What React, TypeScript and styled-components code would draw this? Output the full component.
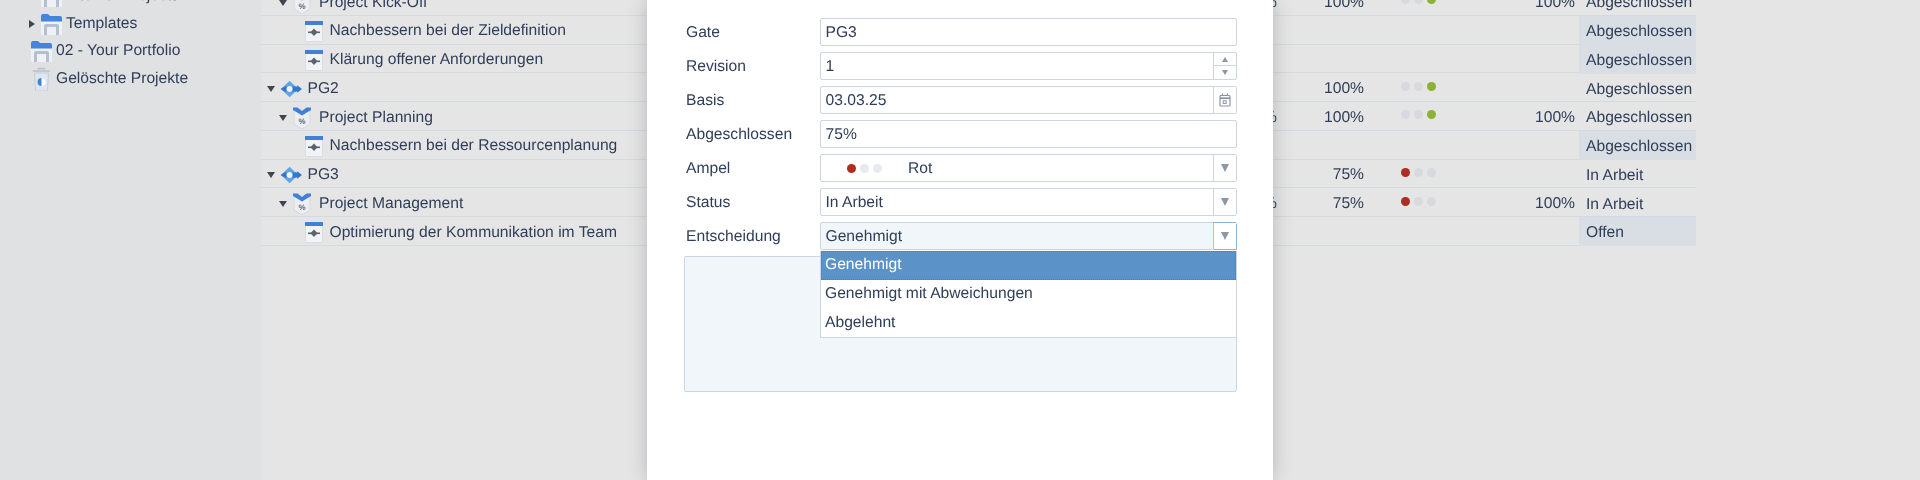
import React from "react";
import styled, { createGlobalStyle } from "styled-components";

const Global = createGlobalStyle`
  html, body { margin: 0; padding: 0; background: #e5e5e5; }
  body { font-family: "Liberation Sans", Arial, sans-serif; color: #2f3e58; text-rendering: geometricPrecision; }
`;

const Page = styled.div`
  position: relative;
  display: flex;
  width: 1920px;
  height: 480px;
  overflow: hidden;
  font-size: 15.65px;
  filter: blur(0.5px);
`;

const Sidebar = styled.aside`
  width: 261px;
  flex: none;
  background: #dfe1e3;
  margin-top: -17.5px;
`;

const TreeItem = styled.div<{ $indent: number }>`
  display: flex;
  align-items: center;
  height: 27.5px;
  padding-left: ${(p) => p.$indent}px;
`;

const Caret = styled.span<{ $dir: "right" | "down" }>`
  width: 0;
  height: 0;
  flex: none;
  ${(p) =>
    p.$dir === "right"
      ? `border-left: 6px solid #3f4650; border-top: 4px solid transparent; border-bottom: 4px solid transparent; margin-right: 6px;`
      : `border-top: 6px solid #3f4650; border-left: 4px solid transparent; border-right: 4px solid transparent; margin-right: 4px;`}
`;

const IconSlot = styled.span<{ $w: number; $mr: number; $ml?: number }>`
  display: flex;
  flex: none;
  width: ${(p) => p.$w}px;
  margin-left: ${(p) => p.$ml ?? 0}px;
  margin-right: ${(p) => p.$mr}px;
`;

const Main = styled.main`
  flex: 1;
  background: #e5e5e5;
`;

const Table = styled.div`
  width: 1435px;
  margin-top: -13px;
`;

const Row = styled.div`
  display: grid;
  grid-template-columns: 1016px 87px 111px 100px 4px 117px;
  height: 28.75px;
  align-items: stretch;
  box-sizing: border-box;
  border-bottom: 1.5px solid #d5d9e1;
`;

const TreeCell = styled.div<{ $depth: number }>`
  display: flex;
  align-items: center;
  padding: 3.5px 0 0 ${(p) => 6 + p.$depth * 11.5}px;
`;

const NumCell = styled.div`
  display: flex;
  align-items: center;
  justify-content: flex-end;
  padding-top: 3.5px;
`;

const DotsCell = styled.div`
  display: flex;
  align-items: center;
  gap: 4px;
  padding: 0 0 2px 37px;
`;

const Dot = styled.span<{ $color: string }>`
  width: 9px;
  height: 9px;
  flex: none;
  border-radius: 50%;
  background: ${(p) => p.$color};
`;

const StatusCell = styled.div<{ $hl: boolean }>`
  grid-column: 6;
  display: flex;
  align-items: center;
  padding: 3.5px 0 0 7px;
  margin-bottom: -1.5px;
  background: ${(p) => (p.$hl ? "#d9dee4" : "transparent")};
`;

const CutPercent = styled.span`
  margin-left: auto;
`;

const Modal = styled.section`
  position: absolute;
  left: 647px;
  top: 0;
  width: 626px;
  height: 480px;
  box-sizing: border-box;
  padding: 18px 36px 0 37px;
  background: #fff;
  box-shadow: 0 0 18px rgba(60, 65, 75, 0.28);
  display: flex;
  flex-direction: column;
  gap: 6px;
`;

const FormRow = styled.div`
  display: grid;
  grid-template-columns: 136px 1fr;
  height: 28px;
  align-items: center;
`;

const Label = styled.label`
  padding: 1.5px 0 0 2px;
`;

const Field = styled.div<{ $focus?: boolean }>`
  position: relative;
  display: flex;
  height: 28px;
  box-sizing: border-box;
  border: 1.5px solid #ccd6e2;
  border-radius: 2px;
  background: ${(p) => (p.$focus ? "#f1f6fb" : "#fff")};
`;

const Value = styled.div`
  flex: 1;
  display: flex;
  align-items: center;
  padding: 2.6px 0 0 4.5px;
  white-space: nowrap;
`;

const Addon = styled.div<{ $focus?: boolean }>`
  width: 22px;
  flex: none;
  display: flex;
  align-items: center;
  justify-content: center;
  background: #fff;
  border-left: 1.5px solid #ccd6e2;
  ${(p) =>
    p.$focus
      ? `box-shadow: 1px 1px 0 #8fb3d9, 0 -1px 0 #8fb3d9; border-left-color: #a9c4e0;`
      : ""}
`;

const Stepper = styled.div`
  width: 22px;
  flex: none;
  display: grid;
  grid-template-rows: 1fr 1fr;
  border-left: 1.5px solid #ccd6e2;
`;

const StepButton = styled.div<{ $top?: boolean }>`
  display: flex;
  align-items: center;
  justify-content: center;
  ${(p) => (p.$top ? "border-bottom: 1.5px solid #ccd6e2;" : "")}
`;

const Arrow = styled.span<{ $up?: boolean; $small?: boolean }>`
  width: 0;
  height: 0;
  border-left: ${(p) => (p.$small ? 3.5 : 4.5)}px solid transparent;
  border-right: ${(p) => (p.$small ? 3.5 : 4.5)}px solid transparent;
  ${(p) => (p.$up ? "border-bottom" : "border-top")}: ${(p) => (p.$small ? 5 : 8)}px solid #8d96a6;
`;

const AmpelValue = styled(Value)`
  gap: 4px;
  padding-left: 26px;
`;

const AmpelDots = styled.span`
  display: flex;
  gap: 4px;
  margin-top: -2.6px;
`;

const AmpelText = styled.span`
  margin-left: 22px;
`;

const TextArea = styled.div`
  height: 136px;
  box-sizing: border-box;
  border: 1.5px solid #ccd6e2;
  border-radius: 2px;
  background: #f1f6fb;
`;

const Dropdown = styled.ul`
  position: absolute;
  left: -1.5px;
  right: -1px;
  top: 27.5px;
  height: 87px;
  margin: 0;
  padding: 0;
  box-sizing: border-box;
  list-style: none;
  background: #fff;
  border: 1.5px solid #ccd6e2;
  border-top-width: 0;
  z-index: 2;
`;

const Option = styled.li<{ $selected?: boolean }>`
  display: flex;
  align-items: center;
  height: 29px;
  padding-left: 4.5px;
  box-sizing: border-box;
  ${(p) =>
    p.$selected
      ? `background: #5b93c9; color: #fff; outline: 1px dotted #4a80b8; outline-offset: -1px;`
      : ""}
`;

const FolderIcon = () => (
  <svg width="21" height="22" viewBox="0 0 21 22">
    <rect x="0" y="7" width="21" height="15" rx="1" fill="#eef1f5" />
    <path d="M0 3a2 2 0 0 1 2-2h5l2 2h10a2 2 0 0 1 2 2v3.5H0z" fill="#4584db" />
    <path d="M3 22V13a2 2 0 0 1 2-2h11a2 2 0 0 1 2 2v9h-3v-8H6v8z" fill="#b4c0cf" />
  </svg>
);

const TrashIcon = () => (
  <svg width="19" height="24" viewBox="0 0 19 24">
    <path d="M6.5 2.5v-1h6v1M1 4h17" stroke="#b7c0cb" strokeWidth="1.6" fill="none" />
    <path d="M2.5 6h14l-1 17a1 1 0 0 1-1 1h-10a1 1 0 0 1-1-1z" fill="#dde6f1" stroke="#c3ccd8" />
    <circle cx="9.5" cy="15" r="4" fill="#fff" />
    <path d="M9.5 11a4 4 0 0 0 0 8z" fill="#3f83d6" />
  </svg>
);

const GateIcon = () => (
  <svg width="22" height="18" viewBox="0 0 23 18">
    <path d="M10 0.5 19 9l-9 8.5L1 9z" fill="#62a4e4" />
    <path d="M0.5 9 5 6.5h13V5l5 4-5 4v-1.5H5z" fill="#2f78cf" />
    <circle cx="10" cy="9" r="3.2" fill="#eef3f9" />
  </svg>
);

const ProjectIcon = () => (
  <svg width="18" height="22" viewBox="0 0 18 22">
    <path d="M1 3h16v14l-8 5-8-5z" fill="#eceef1" stroke="#d6d9de" />
    <path d="M0 0.5h4.5L9 4l4.5-3.5H18v2.5l-9 5.5-9-5.5z" fill="#3f81d8" />
    <text x="9" y="16.5" fontSize="8" fontFamily="Liberation Sans" fontWeight="700" textAnchor="middle" fill="#5d6673">%</text>
  </svg>
);

const TaskIcon = () => (
  <svg width="18" height="21" viewBox="0 0 18 21">
    <rect x="0.5" y="0.5" width="17" height="20" rx="1" fill="#f2f3f5" stroke="#d8dbe0" />
    <rect x="0" y="0" width="18" height="4" fill="#3f81d8" />
    <rect x="3" y="10.5" width="12" height="1.6" fill="#5a6471" />
    <path d="M9 7.5l3.6 3.8L9 15l-3.6-3.7z" fill="#5a6471" />
  </svg>
);

const CalendarIcon = () => (
  <svg width="12" height="14" viewBox="0 0 12 14" fill="none" stroke="#8d96a6" strokeWidth="1.2">
    <rect x="1" y="2.5" width="10" height="10.5" rx="1" />
    <path d="M1 5.2h10" strokeWidth="1.8" />
    <path d="M3.5 0.5v2.5M8.5 0.5v2.5" />
    <rect x="4.2" y="7.8" width="3" height="2.6" strokeWidth="1" />
  </svg>
);

const RED = "#ad2d1f";
const GREEN = "#8bb135";
const OFF = "#d8d9de";
const OFF_LIGHT = "#e8e9ee";

const Dots = ({ on }: { on: "red" | "green" }) => (
  <DotsCell>
    <Dot $color={on === "red" ? RED : OFF} />
    <Dot $color={OFF} />
    <Dot $color={on === "green" ? GREEN : OFF} />
  </DotsCell>
);

type RowData = {
  depth: number;
  kind: "gate" | "project" | "task";
  name: string;
  cut?: string;
  pct?: string;
  on?: "red" | "green";
  pct2?: string;
  status: string;
  hl?: boolean;
};

const rows: RowData[] = [
  { depth: 1, kind: "project", name: "Project Kick-Off", cut: "100%", pct: "100%", on: "green", pct2: "100%", status: "Abgeschlossen" },
  { depth: 2, kind: "task", name: "Nachbessern bei der Zieldefinition", status: "Abgeschlossen", hl: true },
  { depth: 2, kind: "task", name: "Klärung offener Anforderungen", status: "Abgeschlossen", hl: true },
  { depth: 0, kind: "gate", name: "PG2", pct: "100%", on: "green", status: "Abgeschlossen" },
  { depth: 1, kind: "project", name: "Project Planning", cut: "100%", pct: "100%", on: "green", pct2: "100%", status: "Abgeschlossen" },
  { depth: 2, kind: "task", name: "Nachbessern bei der Ressourcenplanung", status: "Abgeschlossen", hl: true },
  { depth: 0, kind: "gate", name: "PG3", pct: "75%", on: "red", status: "In Arbeit" },
  { depth: 1, kind: "project", name: "Project Management", cut: "100%", pct: "75%", on: "red", pct2: "100%", status: "In Arbeit" },
  { depth: 2, kind: "task", name: "Optimierung der Kommunikation im Team", status: "Offen", hl: true },
];

const TreeRowCell = ({ r }: { r: RowData }) => (
  <TreeCell $depth={r.depth}>
    {r.kind === "task" ? (
      <IconSlot $w={18} $mr={7} $ml={14.5}>
        <TaskIcon />
      </IconSlot>
    ) : (
      <>
        <Caret $dir="down" />
        {r.kind === "gate" ? (
          <IconSlot $w={22} $mr={5.5} $ml={1}>
            <GateIcon />
          </IconSlot>
        ) : (
          <IconSlot $w={18} $mr={8} $ml={2.5}>
            <ProjectIcon />
          </IconSlot>
        )}
      </>
    )}
    {r.name}
    <CutPercent>{r.cut}</CutPercent>
  </TreeCell>
);

const TableRow = ({ r }: { r: RowData }) => (
  <Row>
    <TreeRowCell r={r} />
    <NumCell>{r.pct}</NumCell>
    {r.on ? <Dots on={r.on} /> : <div />}
    <NumCell>{r.pct2}</NumCell>
    <StatusCell $hl={!!r.hl}>{r.status}</StatusCell>
  </Row>
);

export default function App() {
  return (
    <>
      <Global />
      <Page>
        <Sidebar>
          <TreeItem $indent={41}>
            <IconSlot $w={21} $mr={4}>
              <FolderIcon />
            </IconSlot>
            Internal Projects
          </TreeItem>
          <TreeItem $indent={29}>
            <Caret $dir="right" />
            <IconSlot $w={21} $mr={4}>
              <FolderIcon />
            </IconSlot>
            Templates
          </TreeItem>
          <TreeItem $indent={31}>
            <IconSlot $w={21} $mr={4}>
              <FolderIcon />
            </IconSlot>
            02 - Your Portfolio
          </TreeItem>
          <TreeItem $indent={32}>
            <IconSlot $w={19} $mr={5}>
              <TrashIcon />
            </IconSlot>
            Gelöschte Projekte
          </TreeItem>
        </Sidebar>
        <Main>
          <Table>
            {rows.map((r) => (
              <TableRow key={r.name} r={r} />
            ))}
          </Table>
        </Main>
        <Modal>
          <FormRow>
            <Label>Gate</Label>
            <Field>
              <Value>PG3</Value>
            </Field>
          </FormRow>
          <FormRow>
            <Label>Revision</Label>
            <Field>
              <Value>1</Value>
              <Stepper>
                <StepButton $top>
                  <Arrow $up $small />
                </StepButton>
                <StepButton>
                  <Arrow $small />
                </StepButton>
              </Stepper>
            </Field>
          </FormRow>
          <FormRow>
            <Label>Basis</Label>
            <Field>
              <Value>03.03.25</Value>
              <Addon>
                <CalendarIcon />
              </Addon>
            </Field>
          </FormRow>
          <FormRow>
            <Label>Abgeschlossen</Label>
            <Field>
              <Value>75%</Value>
            </Field>
          </FormRow>
          <FormRow>
            <Label>Ampel</Label>
            <Field>
              <AmpelValue>
                <AmpelDots>
                  <Dot $color={RED} />
                  <Dot $color={OFF_LIGHT} />
                  <Dot $color={OFF_LIGHT} />
                </AmpelDots>
                <AmpelText>Rot</AmpelText>
              </AmpelValue>
              <Addon>
                <Arrow />
              </Addon>
            </Field>
          </FormRow>
          <FormRow>
            <Label>Status</Label>
            <Field>
              <Value>In Arbeit</Value>
              <Addon>
                <Arrow />
              </Addon>
            </Field>
          </FormRow>
          <FormRow>
            <Label>Entscheidung</Label>
            <Field $focus>
              <Value>Genehmigt</Value>
              <Addon $focus>
                <Arrow />
              </Addon>
              <Dropdown>
                <Option $selected>Genehmigt</Option>
                <Option>Genehmigt mit Abweichungen</Option>
                <Option>Abgelehnt</Option>
              </Dropdown>
            </Field>
          </FormRow>
          <TextArea />
        </Modal>
      </Page>
    </>
  );
}
